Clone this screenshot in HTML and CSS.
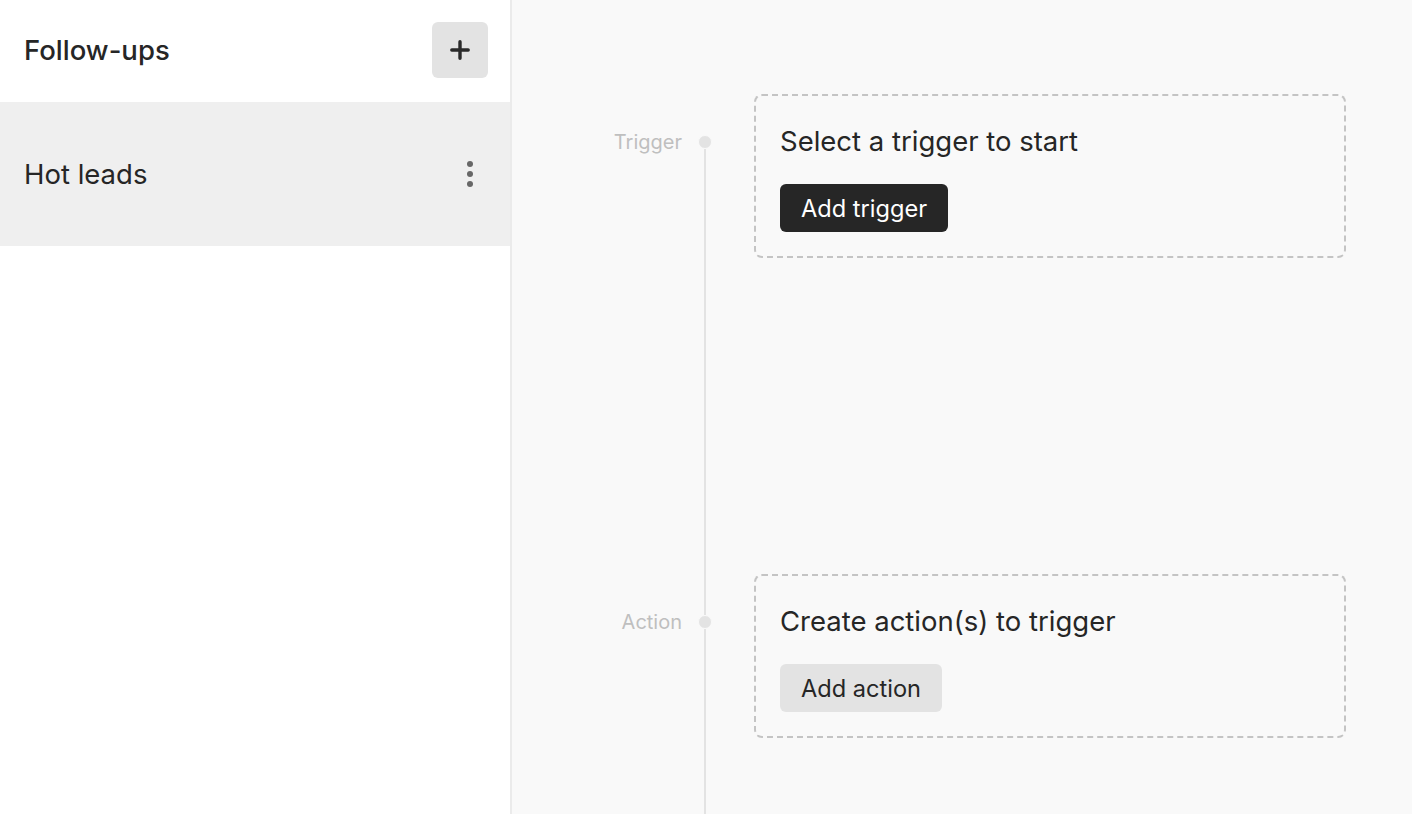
FILE: index.html
```html
<!DOCTYPE html>
<html lang="en">
<head>
<meta charset="utf-8">
<title>Follow-ups</title>
<link rel="stylesheet" href="styles.css">
</head>
<body>
<div class="app">
  <aside class="sidebar">
    <header class="sidebar-header">
      <h1 class="sidebar-title">Follow-ups</h1>
      <button class="icon-btn" aria-label="Add">
        <svg width="20" height="20" viewBox="0 0 20 20"><path d="M10 1.8v16.4M1.8 10h16.4" stroke="#2a2a2a" stroke-width="3.4" stroke-linecap="round"/></svg>
      </button>
    </header>
    <div class="list-item">
      <span class="item-name">Hot leads</span>
      <span class="kebab"><span></span><span></span><span></span></span>
    </div>
  </aside>
  <main class="main">
    <section class="step step-first">
      <div class="step-label">Trigger</div>
      <div class="rail"><span class="dot"></span><span class="line"></span></div>
      <div class="card">
        <div class="card-title">Select a trigger to start</div>
        <button class="btn btn-dark">Add trigger</button>
      </div>
    </section>
    <section class="step step-last">
      <div class="step-label">Action</div>
      <div class="rail"><span class="line line-top"></span><span class="dot"></span><span class="line"></span></div>
      <div class="card">
        <div class="card-title">Create action(s) to trigger</div>
        <button class="btn btn-light">Add action</button>
      </div>
    </section>
  </main>
</div>
</body>
</html>
```
FILE: styles.css
```css
* { box-sizing: border-box; }
html, body { margin: 0; padding: 0; height: 100%; }
body {
  font-family: Inter, "Noto Sans", "Liberation Sans", sans-serif;
  color: #262626;
  background: #ffffff;
}
.app { display: flex; height: 100vh; }
.sidebar {
  width: 512px;
  flex: 0 0 512px;
  background: #fff;
  border-right: 2px solid #ebebeb;
  display: flex;
  flex-direction: column;
}
.sidebar-header {
  height: 102px;
  display: flex;
  align-items: flex-start;
  justify-content: space-between;
  padding: 22px 22px 0 24px;
}
.sidebar-title {
  margin: 0;
  font-size: 27.5px;
  line-height: 56px;
  font-weight: 500;
  letter-spacing: 0;
}
.icon-btn {
  width: 56px;
  height: 56px;
  border: 0;
  border-radius: 6px;
  background: #e3e3e3;
  display: flex;
  align-items: center;
  justify-content: center;
  padding: 0;
}
.list-item {
  height: 144px;
  background: #efefef;
  display: flex;
  align-items: center;
  justify-content: space-between;
  padding: 0 37px 0 24px;
}
.item-name { font-size: 27.5px; font-weight: 400; }
.kebab { display: flex; flex-direction: column; gap: 4px; }
.kebab span { width: 6px; height: 6px; border-radius: 50%; background: #676767; }
.main {
  flex: 1;
  background: #f9f9f9;
  display: flex;
  flex-direction: column;
  padding-top: 94px;
}
.step {
  display: grid;
  grid-template-columns: 170px 46px 592px;
  column-gap: 0;
}
.step .card { margin-left: 26px; }
.step-first { height: 480px; }
.step-last { flex: 1; }
.step-label {
  text-align: right;
  font-size: 20px;
  color: #bfbfbf;
  padding-top: 36px;
  line-height: 24px;
}
.rail {
  display: flex;
  flex-direction: column;
  align-items: center;
  padding-top: 41px;
}
.step-last .rail { padding-top: 0; }
.dot {
  width: 14px;
  height: 14px;
  border-radius: 50%;
  background: #e3e3e3;
  border: 1px solid #f9f9f9;
  flex: 0 0 auto;
}
.line { width: 2px; flex: 1; background: #e3e3e3; }
.line-top { flex: 0 0 41px; }
.card {
  width: 592px;
  height: 164px;
  border: 2px dashed #c4c4c4;
  border-radius: 8px;
  padding: 27px 24px 0 24px;
}
.card-title {
  font-size: 27.5px;
  line-height: 36px;
  font-weight: 400;
  margin-bottom: 25px;
}
.btn {
  font-family: inherit;
  font-size: 23.6px;
  height: 48px;
  padding: 0 21px;
  border: 0;
  border-radius: 6px;
}
.btn-dark { background: #262626; color: #fff; }
.btn-light { background: #e3e3e3; color: #262626; }
```
